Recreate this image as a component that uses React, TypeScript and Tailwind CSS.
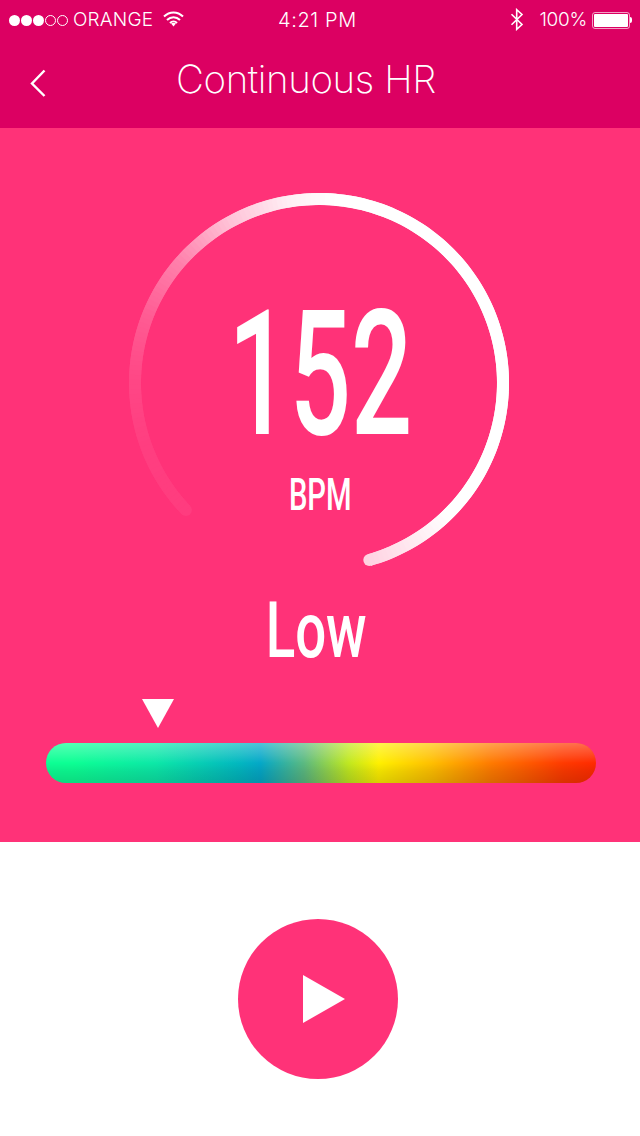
const CX = 319;
const CY = 383;
const R = 184;

// Angles in degrees, clockwise from the top of the ring.
const START = Math.atan2(186 - CX, -(510 - CY)) * (180 / Math.PI) + 360; // left end, about 226
const END = Math.atan2(369 - CX, -(559 - CY)) * (180 / Math.PI) + 360; // right end past the top, about 524

const stops: [number, number][] = [
  [226, 0.05],
  [250, 0.06],
  [270, 0.1],
  [290, 0.2],
  [310, 0.38],
  [330, 0.7],
  [350, 0.92],
  [365, 1],
  [495, 1],
  [524, 0.78],
];

function opacityAt(a: number) {
  for (let i = 0; i < stops.length - 1; i++) {
    const [a0, o0] = stops[i];
    const [a1, o1] = stops[i + 1];
    if (a <= a1) return o0 + ((o1 - o0) * Math.max(0, a - a0)) / (a1 - a0);
  }
  return stops[stops.length - 1][1];
}

// The ring is painted in solid colours, blended with the panel colour, so overlapping pieces leave no seams.
function colorAt(a: number) {
  const o = opacityAt(a);
  const mix = (c: number) => Math.round(c + (255 - c) * o);
  return `rgb(${mix(255)},${mix(50)},${mix(120)})`;
}

function pt(a: number) {
  const t = (a * Math.PI) / 180;
  return [CX + R * Math.sin(t), CY - R * Math.cos(t)];
}

function Ring() {
  const n = 200;
  const step = (END - START) / n;
  const pieces = [];
  for (let i = 0; i < n; i++) {
    const a0 = START + i * step;
    const a1 = Math.min(a0 + step * 2, END);
    const [x0, y0] = pt(a0);
    const [x1, y1] = pt(a1);
    pieces.push(
      <path
        key={i}
        d={`M${x0} ${y0}A${R} ${R} 0 0 1 ${x1} ${y1}`}
        stroke={colorAt(a0)}
        strokeWidth={12}
        fill="none"
      />,
    );
  }
  const [sx, sy] = pt(START);
  const [ex, ey] = pt(END);
  return (
    <svg className="absolute left-0 top-0" width={640} height={600} viewBox="0 128 640 600">
      <circle cx={sx} cy={sy} r={6} fill={colorAt(START)} />
      <circle cx={ex} cy={ey} r={6} fill={colorAt(END)} />
      {pieces}
    </svg>
  );
}

function StatusBar() {
  return (
    <div className="relative flex h-10 items-center justify-between pl-[9px] pr-[8px] text-[19px] font-light text-white font-['Inter','Liberation_Sans',sans-serif]">
      <div className="flex items-center">
        <div className="flex items-center gap-[1px]">
          <span className="h-[11px] w-[11px] rounded-full bg-white" />
          <span className="h-[11px] w-[11px] rounded-full bg-white" />
          <span className="h-[11px] w-[11px] rounded-full bg-white" />
          <span className="h-[11px] w-[11px] rounded-full border border-white" />
          <span className="h-[11px] w-[11px] rounded-full border border-white" />
        </div>
        <span className="ml-[5px] text-[19px] tracking-[0.2px]">ORANGE</span>
        <svg className="ml-[10px] -mt-[3px]" width={21} height={16} viewBox="0 0 21 16" fill="none" stroke="#fff" strokeWidth={2}>
          <path d="M1 5.5C6.5 0 14.5 0 20 5.5" />
          <path d="M4 9C7.8 5.2 13.2 5.2 17 9" />
          <path d="M7 12C9 10 12 10 14 12" />
          <path d="M8 12.6L10.5 15.4 13 12.6 C11.5 11.4 9.5 11.4 8 12.6Z" fill="#fff" stroke="none" />
        </svg>
      </div>
      <span className="absolute left-[278px] top-[5px] text-[20px] tracking-[0.6px]">4:21 PM</span>
      <div className="flex items-center">
        <svg className="mr-[1px] -mt-[2px]" width={14} height={23} viewBox="0 0 14 23" fill="none" stroke="#fff" strokeWidth={1.6}>
          <path d="M1.5 6.2L12 16.5 6.7 21.3V1.7L12 6.5 1.5 16.8" />
        </svg>
        <span className="ml-[14px] text-[19px] tracking-[-0.3px]">100%</span>
        <div className="ml-[5px] flex items-center">
          <div className="flex h-[17px] w-[38px] items-center rounded-[3px] border border-[#ffffffa0] p-[1px]">
            <div className="h-full w-full rounded-[1px] bg-white" />
          </div>
          <div className="h-[6px] w-[2px] rounded-r-[2px] bg-white" />
        </div>
      </div>
    </div>
  );
}

export default function App() {
  return (
    <div className="h-[1136px] w-[640px] overflow-hidden bg-white">
      <header className="h-[128px] bg-[#dc0062]">
        <StatusBar />
        <div className="relative flex h-[88px] items-start justify-start pl-[176px] pt-[14px]">
          <svg className="absolute left-[29px] top-[29px]" width={18} height={28} viewBox="0 0 18 28" fill="none" stroke="#fff" strokeWidth={2.4}>
            <path d="M15.5 1.5L3 14.5 15.5 27" />
          </svg>
          <h1 className="text-[38.5px] font-[250] leading-[50px] tracking-[-0.4px] text-white font-['Inter','Liberation_Sans',sans-serif]">
            Continuous HR
          </h1>
        </div>
      </header>

      <main className="relative flex h-[714px] flex-col items-center bg-[#ff3278] font-['Roboto','Liberation_Sans',sans-serif] text-white">
        <Ring />
        <div className="relative mt-[162px] flex h-[170px] items-center justify-center">
          <span className="block origin-center scale-x-[0.62] text-[174px] font-medium leading-[170px]">152</span>
        </div>
        <span className="relative mt-[7px] block origin-center scale-x-[0.65] text-[45px] font-medium leading-[56px]">BPM</span>
        <span className="relative mr-[8px] mt-[63px] block origin-center scale-x-[0.7] text-[78px] font-medium leading-[90px]">Low</span>

        <div className="relative mt-[23px] ml-[46px] flex w-[550px] flex-col self-start">
          <svg className="ml-[95px]" width={34} height={29} viewBox="0 0 34 29">
            <path d="M1 0H33L17 29Z" fill="#fff" />
          </svg>
          <div className="relative mt-[15px] h-[40px] overflow-hidden rounded-full bg-[linear-gradient(90deg,#0cff94_0%,#0cff94_5%,#0ce8a8_20%,#02b8c0_35%,#04a8c8_39%,#5cba80_47%,#c0e820_55%,#fff000_60.5%,#ffc000_70%,#ff7a00_81%,#ff3a00_94%,#ff2a00_100%)]">
            <div className="absolute inset-0 bg-[linear-gradient(180deg,rgba(255,255,255,0.3)_0%,rgba(255,255,255,0.13)_30%,rgba(255,255,255,0)_50%,rgba(0,0,0,0.07)_70%,rgba(0,0,0,0.14)_100%)]" />
          </div>
        </div>
      </main>

      <div className="flex justify-start pl-[238px] pt-[77px]">
        <button className="flex h-[160px] w-[160px] items-center justify-center rounded-full bg-[#ff3278]">
          <svg className="ml-[12px]" width={42} height={48} viewBox="0 0 42 48">
            <path d="M0 0L42 24 0 48Z" fill="#fff" />
          </svg>
        </button>
      </div>
    </div>
  );
}
